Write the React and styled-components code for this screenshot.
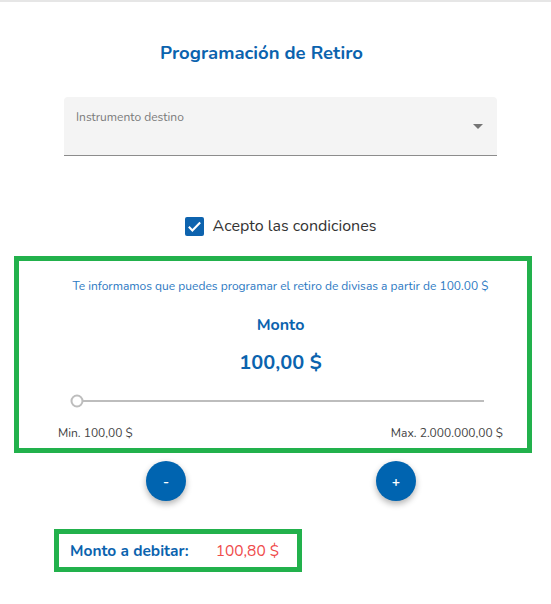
import styled, { createGlobalStyle } from "styled-components";

const GlobalStyle = createGlobalStyle`
    body {
        margin: 0;
        background: #ffffff;
        font-family: Nunito, Lato, "Open Sans", sans-serif;
    }
`;

const Page = styled.main`
    width: 551px;
    min-height: 604px;
    box-sizing: border-box;
    border-top: 2px solid #e6e6e6;
    padding-left: 10px;
    display: flex;
    flex-direction: column;
`;

const Title = styled.h1`
    margin: 39px 0 0;
    padding-right: 38px;
    text-align: center;
    font-size: 18.5px;
    line-height: 24px;
    font-weight: 700;
    color: #0b63ae;
`;

const Select = styled.div`
    width: 433px;
    height: 59px;
    margin: 32px auto 0;
    box-sizing: border-box;
    background: #f4f4f4;
    border-radius: 4px 4px 0 0;
    border-bottom: 1px solid #8c8c8c;
    display: flex;
    justify-content: space-between;
    padding: 12px 14px 0 12px;

    span {
        font-size: 12px;
        line-height: 16px;
        color: #7a7a7a;
    }

    svg {
        margin-top: 15px;
    }
`;

const Check = styled.label`
    margin: 60px auto 0;
    display: flex;
    align-items: center;
    gap: 9px;
    font-size: 16px;
    line-height: 20px;
    color: #333333;
`;

const Box = styled.span`
    width: 19px;
    height: 19px;
    border-radius: 2px;
    background: #0d63ae;
    display: flex;
    align-items: center;
    justify-content: center;
`;

const Card = styled.section`
    margin: 20px 0 0 4px;
    width: 518px;
    box-sizing: border-box;
    border: 5px solid #22b14c;
    padding: 17px 24px 7px 39px;
    display: flex;
    flex-direction: column;
    align-items: center;
`;

const Info = styled.p`
    margin: 0;
    font-size: 12px;
    line-height: 16px;
    color: #2b78c2;
`;

const Label = styled.h2`
    margin: 21px 0 0;
    font-size: 16px;
    line-height: 20px;
    font-weight: 700;
    color: #0b63ae;
`;

const Amount = styled.div`
    margin-top: 15px;
    font-size: 20px;
    line-height: 26px;
    font-weight: 700;
    color: #0b63ae;
`;

const Slider = styled.div`
    align-self: stretch;
    margin-top: 18px;
    padding: 0 19px;
    height: 14px;
    display: flex;
    align-items: center;
`;

const Track = styled.div`
    position: relative;
    flex: 1;
    height: 2px;
    background: #bdbdbd;
`;

const Thumb = styled.span`
    position: absolute;
    top: 50%;
    width: 9px;
    height: 9px;
    border: 2px solid #bdbdbd;
    border-radius: 50%;
    background: #ffffff;
    transform: translate(-50%, -50%);
`;

const Limits = styled.div`
    align-self: stretch;
    margin-top: 17px;
    display: flex;
    justify-content: space-between;
    font-size: 12px;
    line-height: 16px;
    color: #444444;
`;

const Buttons = styled.div`
    margin: 8px 0 0 136px;
    width: 270px;
    display: flex;
    justify-content: space-between;
`;

const Round = styled.button`
    width: 40px;
    height: 40px;
    border: none;
    border-radius: 50%;
    background: #0064b0;
    color: #ffffff;
    font-family: inherit;
    font-size: 14px;
    font-weight: 700;
    box-shadow: 0 3px 6px rgba(0, 0, 0, 0.3);
    padding: 0;
`;

const Debit = styled.div`
    margin: 28px 0 0 44px;
    width: 248px;
    height: 43px;
    box-sizing: border-box;
    border: 5px solid #22b14c;
    padding-left: 11px;
    display: flex;
    align-items: center;
    gap: 27px;
    font-size: 15.5px;

    strong {
        color: #0b63ae;
    }

    span {
        color: #ef4b4b;
    }
`;

export default function App() {
    return (
        <>
            <GlobalStyle />
            <Page>
                <Title>Programación de Retiro</Title>
                <Select>
                    <span>Instrumento destino</span>
                    <svg width="10" height="5" viewBox="0 0 10 5">
                        <path d="M0 0h10L5 5z" fill="#757575" />
                    </svg>
                </Select>
                <Check>
                    <Box>
                        <svg width="17" height="17" viewBox="0 0 24 24">
                            <path d="M4 12.5l5 5L20 6.5" fill="none" stroke="#fff" strokeWidth="3" />
                        </svg>
                    </Box>
                    Acepto las condiciones
                </Check>
                <Card>
                    <Info>Te informamos que puedes programar el retiro de divisas a partir de 100.00 $</Info>
                    <Label>Monto</Label>
                    <Amount>100,00 $</Amount>
                    <Slider>
                        <Track>
                            <Thumb style={{ left: "0%" }} />
                        </Track>
                    </Slider>
                    <Limits>
                        <span>Min. 100,00 $</span>
                        <span>Max. 2.000.000,00 $</span>
                    </Limits>
                </Card>
                <Buttons>
                    <Round>-</Round>
                    <Round>+</Round>
                </Buttons>
                <Debit>
                    <strong>Monto a debitar:</strong>
                    <span>100,80 $</span>
                </Debit>
            </Page>
        </>
    );
}
